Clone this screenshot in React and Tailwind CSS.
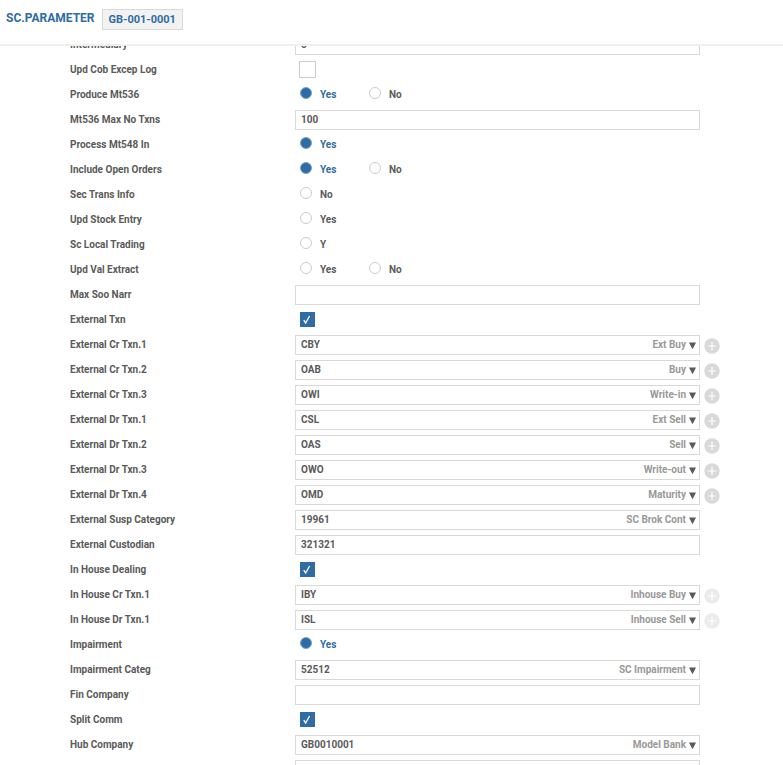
const rows = [
  { label: "Intermediary", kind: "text", value: "5" },
  { label: "Upd Cob Excep Log", kind: "check", checked: false },
  { label: "Produce Mt536", kind: "radio", options: ["Yes", "No"], value: "Yes" },
  { label: "Mt536 Max No Txns", kind: "text", value: "100" },
  { label: "Process Mt548 In", kind: "radio", options: ["Yes"], value: "Yes" },
  { label: "Include Open Orders", kind: "radio", options: ["Yes", "No"], value: "Yes" },
  { label: "Sec Trans Info", kind: "radio", options: ["No"] },
  { label: "Upd Stock Entry", kind: "radio", options: ["Yes"] },
  { label: "Sc Local Trading", kind: "radio", options: ["Y"] },
  { label: "Upd Val Extract", kind: "radio", options: ["Yes", "No"] },
  { label: "Max Soo Narr", kind: "text", value: "" },
  { label: "External Txn", kind: "check", checked: true },
  { label: "External Cr Txn.1", kind: "lookup", value: "CBY", note: "Ext Buy", add: "on" },
  { label: "External Cr Txn.2", kind: "lookup", value: "OAB", note: "Buy", add: "on" },
  { label: "External Cr Txn.3", kind: "lookup", value: "OWI", note: "Write-in", add: "on" },
  { label: "External Dr Txn.1", kind: "lookup", value: "CSL", note: "Ext Sell", add: "on" },
  { label: "External Dr Txn.2", kind: "lookup", value: "OAS", note: "Sell", add: "on" },
  { label: "External Dr Txn.3", kind: "lookup", value: "OWO", note: "Write-out", add: "on" },
  { label: "External Dr Txn.4", kind: "lookup", value: "OMD", note: "Maturity", add: "on" },
  { label: "External Susp Category", kind: "lookup", value: "19961", note: "SC Brok Cont" },
  { label: "External Custodian", kind: "text", value: "321321" },
  { label: "In House Dealing", kind: "check", checked: true },
  { label: "In House Cr Txn.1", kind: "lookup", value: "IBY", note: "Inhouse Buy", add: "dim" },
  { label: "In House Dr Txn.1", kind: "lookup", value: "ISL", note: "Inhouse Sell", add: "dim" },
  { label: "Impairment", kind: "radio", options: ["Yes"], value: "Yes" },
  { label: "Impairment Categ", kind: "lookup", value: "52512", note: "SC Impairment" },
  { label: "Fin Company", kind: "text", value: "" },
  { label: "Split Comm", kind: "check", checked: true },
  { label: "Hub Company", kind: "lookup", value: "GB0010001", note: "Model Bank" },
  { label: "", kind: "text", value: "" },
];

function Box({ id, row }) {
  return (
    <div className="flex h-5 w-full border border-[#d9d9d9] bg-white">
      <input
        id={id}
        type="text"
        defaultValue={row.value}
        aria-label={row.label || "Next field"}
        className="h-[18px] min-w-0 flex-1 bg-transparent px-[5px] text-[10px] leading-[18px] font-bold text-[#5a5a5a] outline-none"
      />
      {row.kind === "lookup" && (
        <>
          <span className="text-[10px] leading-[18px] font-bold text-[#999]">{row.note}</span>
          <button type="button" aria-label={`Choose ${row.label}`} className="flex w-[13px] items-center justify-center">
            <svg width="7" height="7" viewBox="0 0 7 7" className="mt-0.5 fill-[#5a5a5a]">
              <path d="M0 0.5H7L3.8 6.8H3.2Z" />
            </svg>
          </button>
        </>
      )}
    </div>
  );
}

function Check({ id, checked }) {
  return (
    <span className="ml-1 grid size-[17px]">
      <input
        id={id}
        type="checkbox"
        defaultChecked={checked}
        className="peer col-start-1 row-start-1 size-[17px] appearance-none border border-[#ccc] bg-white checked:m-px checked:size-[15px] checked:border-[#2f6ca3] checked:bg-[#2f6ca3]"
      />
      <svg viewBox="0 0 17 17" className="pointer-events-none invisible col-start-1 row-start-1 size-[17px] peer-checked:visible">
        <path d="M4.8 9.2L6.6 12L10.6 5" fill="none" stroke="#fff" strokeWidth="1.3" />
      </svg>
    </span>
  );
}

function Radios({ id, row }) {
  return (
    <div role="radiogroup" aria-label={row.label} className="flex pl-[5px]">
      {row.options.map((option) => (
        <label key={option} className="flex w-[69px] gap-2">
          <input
            type="radio"
            name={id}
            defaultChecked={row.value === option}
            className="peer size-3 shrink-0 appearance-none rounded-full border border-[#ccc] bg-white checked:border-[#7ea3c6] checked:bg-[#2f6ca3]"
          />
          <span className="text-[10px] leading-[15px] font-bold text-[#5a5a5a] peer-checked:text-[#2f6ca3]">{option}</span>
        </label>
      ))}
    </div>
  );
}

function Row({ row, id }) {
  return (
    <div className="flex h-[25px] items-center">
      <div className="w-[225px] shrink-0 text-[10px] leading-4 font-bold text-[#5a5a5a]">
        {row.kind === "radio" ? <span>{row.label}</span> : <label htmlFor={id}>{row.label}</label>}
      </div>
      <div className="min-w-0 flex-1">
        {row.kind === "radio" && <Radios id={id} row={row} />}
        {row.kind === "check" && <Check id={id} checked={row.checked} />}
        {(row.kind === "text" || row.kind === "lookup") && <Box id={id} row={row} />}
      </div>
      <div className="flex w-[83px] shrink-0 pt-0.5 pl-1">
        {row.add && (
          <button type="button" aria-label={`Add ${row.label}`} className={row.add === "dim" ? "text-[#ececec]" : "text-[#d9d9d9]"}>
            <svg width="16" height="16" viewBox="0 0 16 16" className="block">
              <circle cx="8" cy="8" r="7.7" fill="currentColor" />
              <path d="M8 4V12M4 8H12" stroke="#fff" strokeWidth="1.2" />
            </svg>
          </button>
        )}
      </div>
    </div>
  );
}

export default function App() {
  return (
    <div className="flex h-screen flex-col overflow-hidden bg-white font-[Roboto,'Liberation_Sans',sans-serif]">
      <header className="flex h-[46px] shrink-0 items-start gap-[7px] border-b-2 border-[#f0f0f0] px-1.5 pt-[9px]">
        <h1 className="text-xs leading-[19px] font-bold text-[#2f6ca3]">SC.PARAMETER</h1>
        <span className="border border-[#d9d9d9] bg-[#f2f2f2] px-1.5 text-[11px] leading-[19px] font-bold text-[#2f6ca3]">GB-001-0001</span>
      </header>
      <main className="min-h-0 flex-1 overflow-hidden">
        <form className="-mt-3.5 pl-[70px]">
          {rows.map((row, i) => (
            <Row key={i} row={row} id={`field-${i}`} />
          ))}
        </form>
      </main>
    </div>
  );
}
